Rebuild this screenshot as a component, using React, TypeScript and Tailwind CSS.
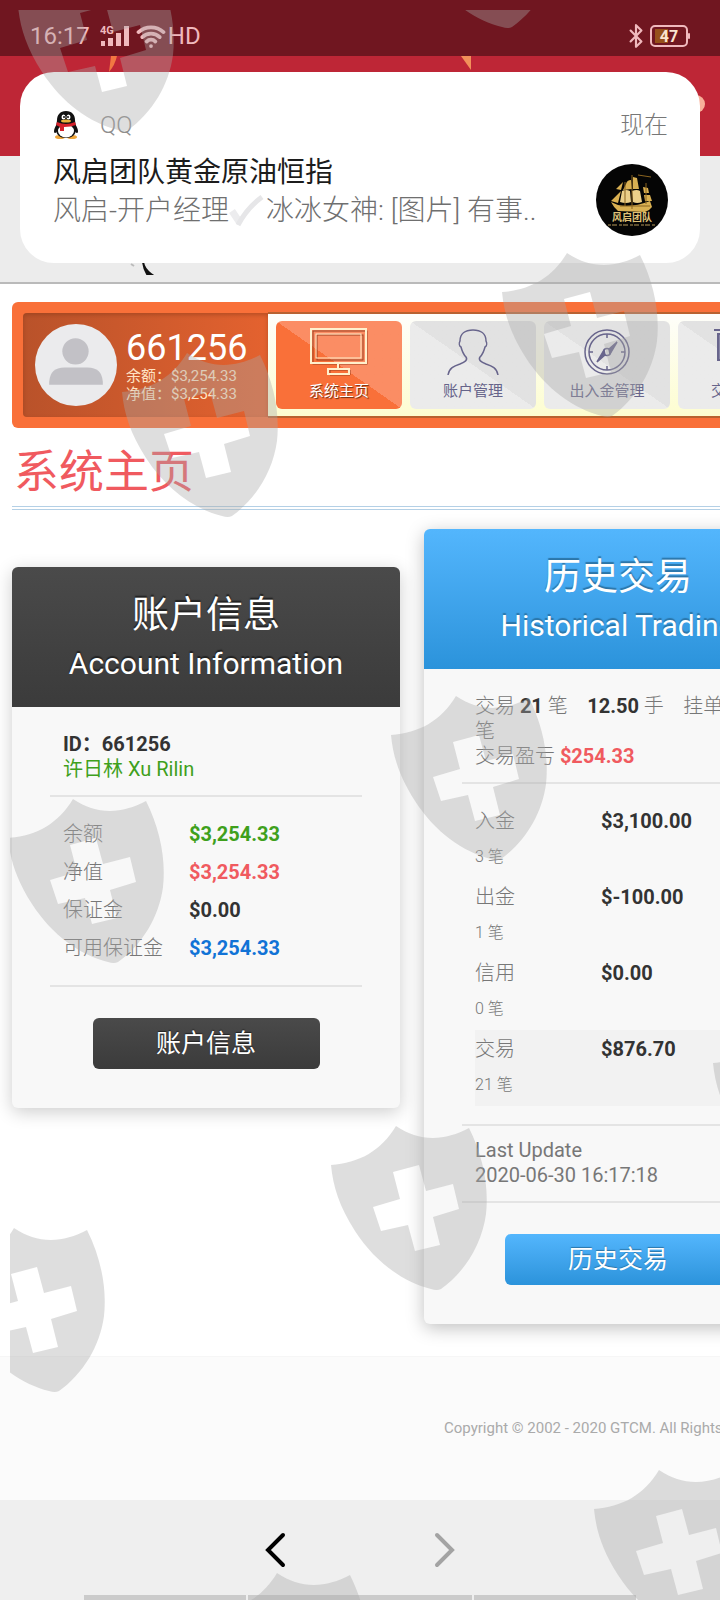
import { Wifi, Bluetooth } from 'lucide-react';

const marks = [
  [18, -33],
  [402, -136],
  [502, 253],
  [122, 353],
  [8, 799],
  [391, 696],
  [713, 1024],
  [331, 1126],
  [-51, 1228],
  [594, 1470],
  [212, 1573],
];

const accountRows = [
  { label: '余额', value: '$3,254.33', color: 'text-[#3fa01c]' },
  { label: '净值', value: '$3,254.33', color: 'text-[#f05a5f]' },
  { label: '保证金', value: '$0.00', color: 'text-[#333]' },
  { label: '可用保证金', value: '$3,254.33', color: 'text-[#1173d6]' },
];

const historyRows = [
  { label: '入金', count: 3, value: '$3,100.00' },
  { label: '出金', count: 1, value: '$-100.00' },
  { label: '信用', count: 0, value: '$0.00' },
  { label: '交易', count: 21, value: '$876.70', active: true },
];

function Watermark() {
  return (
    <svg
      className="absolute top-[10px] left-[10px] w-full h-full pointer-events-none"
      fill="#a8a8a8"
      fillOpacity="0.38"
      aria-hidden="true"
    >
      {marks.map(([x, y]) => (
        <path
          key={`${x},${y}`}
          transform={`translate(${x - 10} ${y - 10})`}
          fillRule="evenodd"
          d="M0 39C28 37 50 25 65 0C88 16 114 15 138 2C152 30 158 60 155 88C151 118 134 146 110 163Q106 165 100 163C72 156 44 136 24 105C8 80 2 60 0 39ZM62 46L88 39L95 65L122 58L128 83L102 91L109 119L84 125L77 99L50 105L42 81L69 73Z"
        />
      ))}
    </svg>
  );
}

function StatusBar() {
  return (
    <div className="h-14 bg-[#701620] px-[30px] pt-4 flex items-center text-[#f0b9bd] text-2xl">
      <span>16:17</span>
      <svg className="ml-[10px] w-[30px] h-[24px]" viewBox="0 0 30 24" fill="currentColor">
        <rect x="1" y="17" width="4" height="5" />
        <rect x="8" y="14" width="5" height="8" />
        <rect x="16" y="9" width="5" height="13" />
        <rect x="24" y="2" width="5" height="20" />
        <text x="0" y="10" fontSize="11" fontWeight="700">4G</text>
      </svg>
      <Wifi className="ml-[6px] w-[30px] h-[30px]" strokeWidth={3} />
      <span className="ml-[2px]">HD</span>
      <Bluetooth className="ml-auto w-[28px] h-[26px]" strokeWidth={2} />
      <svg className="w-[40px] h-[22px]" viewBox="0 0 40 22" fill="none">
        <rect x="5" y="4" width="13" height="14" fill="#96501a" />
        <rect x="1" y="1" width="36" height="20" rx="4" stroke="currentColor" strokeWidth="2" />
        <rect x="38" y="8" width="2" height="6" rx="1" fill="currentColor" />
        <text x="19" y="17" fontSize="16" fontWeight="700" textAnchor="middle" fill="#fbe3d0">47</text>
      </svg>
    </div>
  );
}

function QQIcon() {
  return (
    <svg className="w-[26px] h-[30px]" viewBox="0 0 26 30">
      <ellipse cx="7" cy="27" rx="5" ry="2" fill="#f0a63a" />
      <ellipse cx="19" cy="27" rx="5" ry="2" fill="#f0a63a" />
      <path d="M5 13C1 17 0 23 2 23C3 23 4 21 5 20ZM21 13C25 17 26 23 24 23C23 23 22 21 21 20Z" fill="#111" />
      <path d="M13 1C7 1 4 5 4 10C4 12 3 15 3 19C3 25 7 28 13 28C19 28 23 25 23 19C23 15 22 12 22 10C22 5 19 1 13 1Z" fill="#111" />
      <ellipse cx="13" cy="21" rx="8" ry="6.500" fill="#fff" />
      <ellipse cx="10.500" cy="7" rx="2" ry="2.500" fill="#fff" />
      <ellipse cx="15.500" cy="7" rx="2" ry="2.500" fill="#fff" />
      <circle cx="11" cy="7" r="1" fill="#111" />
      <circle cx="15" cy="7" r="1" fill="#111" />
      <ellipse cx="13" cy="11" rx="5" ry="1.500" fill="#e8b23c" />
      <path d="M4 12Q13 16 22 12L23 15Q18 17 11 17L11 21L7 21L7 17Q5 16 3 15Z" fill="#d5202a" />
    </svg>
  );
}

function ShipAvatar() {
  return (
    <svg className="w-[72px] h-[72px] shrink-0" viewBox="0 0 72 72">
      <circle cx="36" cy="36" r="36" fill="#050505" />
      <g fill="#d9b052">
        <path d="M15 38L22 41Q36 44 54 37L56 43Q53 47 49 48L22 47Q18 44 15 38Z" />
        <path d="M30 20Q31 16 35 16L36 25L27 26ZM37 13L41 14L43 25L37 25Z" />
        <path d="M26 27Q30 25 34 27L35 38Q30 40 24 38ZM36 27Q41 25 44 27L46 38Q41 40 37 38Z" fill="#ecd08a" />
        <path d="M27 18L20 25L25 26ZM25 27L15 37L22 39Z" />
        <path d="M47 23L52 24L53 29L48 29ZM48 31L54 31L56 37L49 37Z" />
      </g>
      <path d="M36 11V45M50 19V40M29 18V42M24 42H54M42 11L55 13" stroke="#8a6420" />
      <text x="36" y="57" fontSize="10" fontWeight="700" textAnchor="middle" fill="#dfc178">风启团队</text>
      <path d="M12 61H60" stroke="#b79a5a" strokeDasharray="3 1 5 2" />
    </svg>
  );
}

function Notification() {
  return (
    <section className="absolute top-[72px] inset-x-[20px] h-[191px] rounded-[34px] bg-white pl-[33px] pr-8 pt-[36px]">
      <div className="flex items-center h-[34px] text-2xl text-[#8e8e8e]">
        <QQIcon />
        <span className="ml-[21px] font-light">QQ</span>
        <span className="ml-auto font-light text-[#777]">现在</span>
      </div>
      <div className="flex justify-between">
        <div className="min-w-0 pt-[12px] text-[28px] leading-[38px] whitespace-nowrap">
          <h2 className="text-[#1c1c1c]">风启团队黄金原油恒指</h2>
          <p className="flex items-center font-light text-[#6f6f6f]">
            风启-开户经理
            <svg className="w-[37px] h-[34px]" viewBox="0 0 37 34" fill="none">
              <path d="M3 17L11 29" stroke="#ececee" strokeWidth="7" />
              <path d="M9 31Q18 14 33 3" stroke="#e6e6e8" strokeWidth="5" />
            </svg>
            冰冰女神: [图片] 有事..
          </p>
        </div>
        <div className="pt-[22px]">
          <ShipAvatar />
        </div>
      </div>
    </section>
  );
}

function BrowserHeader() {
  return (
    <div className="relative">
      <svg className="block w-full h-[100px] bg-[#be2636]" viewBox="0 0 720 100" preserveAspectRatio="none">
        <path d="M111 0H117Q115 9 109 16Q110 8 111 0Z" fill="#f27842" />
        <path d="M461 0H471V14Z" fill="#f2905a" />
        <circle cx="696" cy="48" r="9" fill="#f8b09a" />
      </svg>
      <div className="h-[128px] bg-[#ececec] border-b-2 border-[#bababa] flex items-end">
        <svg className="w-[160px] h-[22px]" viewBox="0 0 160 22" fill="none">
          <path d="M143 2Q144 9 151 14L147 14Q144 9 143 2Z" fill="#111" stroke="#111" strokeWidth="2" />
          <path d="M131 4L134 6" stroke="#bbb" strokeWidth="2" />
        </svg>
      </div>
    </div>
  );
}

function MonitorIcon() {
  return (
    <svg className="w-[58px] h-[50px]" viewBox="0 0 58 50" fill="none">
      <g stroke="#9c4322" strokeWidth="1" transform="translate(1 1)">
        <rect x="2" y="2" width="54" height="33" />
        <rect x="6" y="6" width="46" height="25" />
        <path d="M28 36V39M19 41H39V46H19Z" />
      </g>
      <g stroke="#fff0cc" strokeWidth="2">
        <rect x="1" y="1" width="55" height="34" />
        <rect x="6" y="6" width="45" height="24" strokeWidth="1" />
        <path d="M28 35V40M18 41H39V46H18Z" />
      </g>
    </svg>
  );
}

function PersonIcon() {
  return (
    <svg className="w-[58px] h-[50px]" viewBox="0 0 58 50" fill="none" stroke="#68658c" strokeWidth="1.500">
      <path d="M4 47C5 40 10 38 16 36C21 34 24 32 22 29C19 26 18 23 17 19C15 18 15 15 16 13C16 6 21 2 29 2C37 2 42 6 42 13C43 15 43 18 41 19C40 23 39 26 36 29C34 32 37 34 42 36C48 38 53 40 54 47" />
    </svg>
  );
}

function CompassIcon() {
  return (
    <svg className="w-[58px] h-[50px]" viewBox="0 0 58 50" fill="none" stroke="#68658c" strokeWidth="1.500">
      <circle cx="29" cy="24" r="22" />
      <circle cx="29" cy="24" r="18" />
      <circle cx="29" cy="24" r="3.500" />
      <path d="M29 6V10M29 38V42M11 24H15M43 24H47" />
      <path d="M31 21L39 14L32 26ZM27 27L19 34L26 22Z" fill="#68658c" />
    </svg>
  );
}

function ReportIcon() {
  return (
    <svg className="w-[58px] h-[50px]" viewBox="0 0 58 50" fill="none" stroke="#68658c" strokeWidth="2">
      <path d="M2 2H56" />
      <rect x="6" y="6" width="46" height="26" fill="#8886a6" />
      <path d="M29 32V46" />
    </svg>
  );
}

const tabs = [
  { label: '系统主页', icon: <MonitorIcon />, active: true },
  { label: '账户管理', icon: <PersonIcon /> },
  { label: '出入金管理', icon: <CompassIcon /> },
  { label: '交易管理', icon: <ReportIcon /> },
];

function MainNav() {
  return (
    <div className="w-max rounded-md bg-[#f97039] p-[11px] flex">
      <div className="w-[245px] h-[104px] rounded-l-sm bg-linear-to-r from-[#b9522a] to-[#e4622f] shadow-[inset_0_2px_4px_rgba(120,50,20,0.4)] pl-3 flex items-center">
        <svg className="w-[82px] h-[82px]" viewBox="0 0 81 81">
          <circle cx="40.500" cy="40.500" r="40.500" fill="#ebebed" />
          <circle cx="40" cy="27" r="13" fill="#c2c1c6" />
          <path d="M14 60V57Q15 43 29 43H52Q66 43 67 57V60Z" fill="#c2c1c6" />
        </svg>
        <div className="ml-[9px] text-[15px] leading-[18px] text-[#ffe3c4]">
          <div className="pt-[2px] text-[36px] leading-[38px] text-white">661256</div>
          <div>余额：$3,254.33</div>
          <div>净值：$3,254.33</div>
        </div>
      </div>
      <nav className="flex gap-2 h-[106px] -my-px border-y-2 border-[#b8622f] bg-linear-to-b from-[#fefefa] to-[#fdfdd0] px-2 py-[7px]">
        {tabs.map((tab) => (
          <button
            key={tab.label}
            className={`w-[126px] rounded-md flex flex-col items-center pt-[7px] text-[15px] leading-[26px] bg-linear-to-tr from-50% to-50% ${
              tab.active
                ? 'from-[#f97039] to-[#fb8d64] text-white [text-shadow:1px_1px_1px_#6b2a10]'
                : 'from-[#ebebeb] to-[#e2e2e2] text-[#66648a]'
            }`}
          >
            {tab.icon}
            {tab.label}
          </button>
        ))}
      </nav>
    </div>
  );
}

function CardHeader({ title, sub, className }: { title: string; sub: string; className: string }) {
  return (
    <header className={`h-[140px] rounded-t-md pt-6 text-center text-white ${className}`}>
      <h2 className="text-[37px] leading-[50px]">{title}</h2>
      <div className="text-[30px] leading-[46px]">{sub}</div>
    </header>
  );
}

function Divider() {
  return <hr className="-mx-[13px] border-t-2 border-[#e4e4e4]" />;
}

function AccountCard() {
  return (
    <section className="w-[388px] shrink-0 rounded-md bg-[#f8f8f8] shadow-[0_4px_18px_rgba(0,0,0,0.2)]">
      <CardHeader
        title="账户信息"
        sub="Account Information"
        className="bg-linear-to-b from-[#4a4a4a] to-[#3b3b3b] [text-shadow:0_-2px_1px_#222]"
      />
      <div className="px-[51px] pb-[39px] text-[20px] leading-[25px] text-[#777]">
        <div className="pt-[25px] pb-[13px]">
          <div className="font-bold text-[#333]">ID：661256</div>
          <div className="text-[#3fa01c]">许日林 Xu Rilin</div>
        </div>
        <Divider />
        <table className="my-[18px]">
          <tbody>
            {accountRows.map((row) => (
              <tr key={row.label} className="h-[38px]">
                <th scope="row" className="w-[126px] text-left font-light">{row.label}</th>
                <td className={`font-bold ${row.color}`}>{row.value}</td>
              </tr>
            ))}
          </tbody>
        </table>
        <Divider />
        <div className="pt-[31px] flex justify-center">
          <button className="w-[227px] h-[51px] rounded-md bg-linear-to-b from-[#4a4a4a] to-[#3b3b3b] text-[25px] text-white [text-shadow:0_-1px_1px_#222]">
            账户信息
          </button>
        </div>
      </div>
    </section>
  );
}

function HistoryCard() {
  return (
    <section className="w-[388px] shrink-0 rounded-md bg-[#f8f8f8] shadow-[0_4px_18px_rgba(0,0,0,0.25)]">
      <CardHeader
        title="历史交易"
        sub="Historical Trading"
        className="bg-linear-to-b from-[#53b6fd] to-[#2b93db] [text-shadow:0_-2px_1px_#2b75a8]"
      />
      <div className="px-[51px] pb-[39px] text-[20px] leading-[25px] text-[#777]">
        <div className="pt-[25px] pb-[13px] font-light">
          <div>
            交易 <b className="font-bold text-[#333]">21</b> 笔&nbsp;&nbsp;&nbsp;{' '}
            <b className="font-bold text-[#333]">12.50</b> 手&nbsp;&nbsp;&nbsp; 挂单{' '}
            <b className="font-bold text-[#333]">0</b> 笔
          </div>
          <div>
            交易盈亏 <b className="font-bold text-[#f05a5f]">$254.33</b>
          </div>
        </div>
        <Divider />
        <table className="mt-[18px] mb-[18px] w-full">
          <tbody>
            {historyRows.map((row) => (
              <tr key={row.label} className={`h-[76px] align-top ${row.active ? 'bg-[#f2f2f2]' : ''}`}>
                <th scope="row" className="w-[126px] text-left font-light">
                  <div className="leading-[38px]">{row.label}</div>
                  <div className="text-base leading-[34px]">{row.count} 笔</div>
                </th>
                <td className="font-bold leading-[38px] text-[#333]">{row.value}</td>
              </tr>
            ))}
          </tbody>
        </table>
        <Divider />
        <div className="pt-[12px] pb-[13px]">
          Last Update
          <br />
          2020-06-30 16:17:18
        </div>
        <Divider />
        <div className="pt-[31px] flex justify-center">
          <button className="w-[227px] h-[51px] rounded-md bg-linear-to-b from-[#53b6fd] to-[#2b93db] text-[25px] text-white [text-shadow:0_-1px_1px_#2b75a8]">
            历史交易
          </button>
        </div>
      </div>
    </section>
  );
}

function BottomBar() {
  return (
    <div className="bg-[#efefef]">
      <div className="h-[95px] pt-[4px] flex items-center justify-center gap-[148px]">
        <button aria-label="后退">
          <svg className="w-[22px] h-[36px]" viewBox="0 0 22 36" fill="none" stroke="#000" strokeWidth="4" strokeLinecap="round">
            <path d="M19 3L4 18L19 33" />
          </svg>
        </button>
        <button aria-label="前进">
          <svg className="w-[22px] h-[36px]" viewBox="0 0 22 36" fill="none" stroke="#a3a3a3" strokeWidth="4" strokeLinecap="round">
            <path d="M3 3L18 18L3 33" />
          </svg>
        </button>
      </div>
      <div className="mx-[84px] grid grid-cols-[162fr_224fr_162fr] gap-[2px]">
        <div className="h-[5px] bg-[#cbcbcb]" />
        <div className="h-[5px] bg-[#cbcbcb]" />
        <div className="h-[5px] bg-[#cbcbcb]" />
      </div>
    </div>
  );
}

export default function App() {
  return (
    <div className="relative overflow-hidden bg-white font-['Roboto','Noto_Sans_CJK_SC',sans-serif]">
      <StatusBar />
      <BrowserHeader />
      <main className="pl-3 pt-[18px] pb-[32px]">
        <MainNav />
        <h1 className="pt-[15px] pl-[2px] pb-[3px] text-[45px] leading-[60px] text-[#f05a5f]">系统主页</h1>
        <div className="h-[4px] border-y border-[#b4d0e6]" />
        <div className="mt-[19px] flex items-start gap-6">
          <div className="pt-[38px]">
            <AccountCard />
          </div>
          <HistoryCard />
        </div>
      </main>
      <footer className="h-[144px] border-t border-[#f6f6f6] bg-[#fbfbfb] pl-[444px] flex items-center text-[15px] text-[#aaa] whitespace-nowrap">
        Copyright © 2002 - 2020 GTCM. All Rights Reserved.
      </footer>
      <BottomBar />
      <Notification />
      <Watermark />
    </div>
  );
}
